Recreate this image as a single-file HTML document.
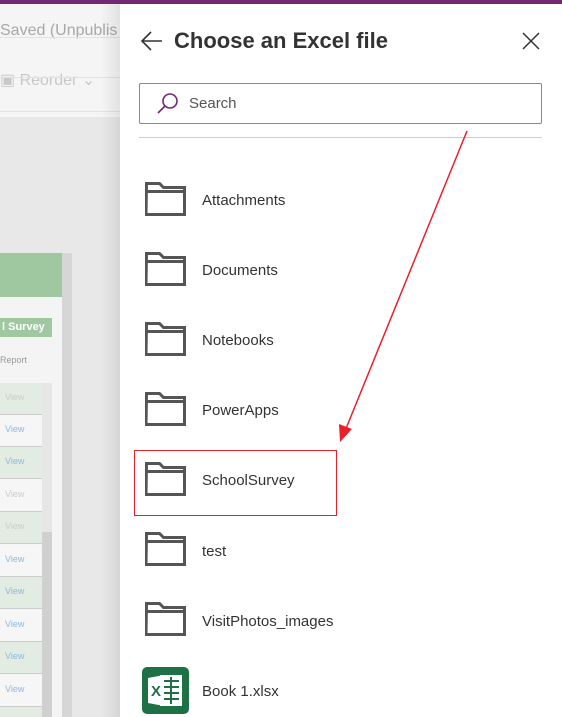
<!DOCTYPE html>
<html><head><style>
*{margin:0;padding:0;box-sizing:border-box}
body{width:562px;height:717px;overflow:hidden;position:relative;font-family:"Segoe UI","Liberation Sans",sans-serif;background:#fff}
.abs{position:absolute}
.left{left:0;top:0;width:120px;height:717px;background:#e8e8e8;overflow:hidden}
.view{position:absolute;left:0;width:42px;height:32px;font-size:9px;color:#8fb8e0;padding:9px 0 0 5px;border-bottom:1px solid #ccc}
.fold{position:absolute;left:145px;width:41px;height:34px}
.lbl{position:absolute;left:202px;font-size:15px;color:#333}
</style></head><body>
<div class="abs left">
  <div class="abs" style="left:0;top:0;width:120px;height:117px;background:#f5f5f5"></div>
  <div class="abs" style="left:0;top:22px;font-size:16px;color:#a8a8a8">Saved (Unpublis</div>
  <div class="abs" style="left:0;top:37px;width:120px;height:1px;background:#e2e2e2"></div>
  <div class="abs" style="left:0;top:70px;font-size:16px;color:#c8c8c8">&#9635; Reorder &#8964;</div>
  <div class="abs" style="left:0;top:77px;width:120px;height:1px;background:#e2e2e2"></div>
  <div class="abs" style="left:0;top:111px;width:120px;height:1px;background:#e2e2e2"></div>
  <div class="abs" style="left:0;top:253px;width:72px;height:464px;background:#f4f4f4"></div>
  <div class="abs" style="left:0;top:253px;width:62px;height:44px;background:#a0c8a0"></div>
  <div class="abs" style="left:62px;top:253px;width:10px;height:464px;background:#d6d6d6"></div>
  <div class="abs" style="left:0;top:318px;width:52px;height:19px;background:#a0c8a0;color:#fff;font-weight:bold;font-size:11px;padding:3px 0 0 2px">l Survey</div>
  <div class="abs" style="left:0;top:355px;font-size:9px;color:#999">Report</div>
  <div class="abs" style="left:42px;top:383px;width:10px;height:334px;background:#e6e6e6"></div>
  <div class="abs" style="left:42px;top:532px;width:10px;height:185px;background:#d0d0d0"></div>
  <div class="view" style="top:383px;background:#e2ece2;color:#ccc">View</div>
  <div class="view" style="top:415px;background:#f6f6f6">View</div>
  <div class="view" style="top:447px;background:#e2ece2">View</div>
  <div class="view" style="top:480px;background:#f6f6f6;color:#ccc">View</div>
  <div class="view" style="top:512px;background:#e2ece2;color:#ccc">View</div>
  <div class="view" style="top:545px;background:#f6f6f6">View</div>
  <div class="view" style="top:577px;background:#e2ece2">View</div>
  <div class="view" style="top:610px;background:#f6f6f6">View</div>
  <div class="view" style="top:642px;background:#e2ece2">View</div>
  <div class="view" style="top:675px;background:#f6f6f6">View</div>
  <div class="view" style="top:707px;background:#e2ece2">View</div>
  <div class="abs" style="left:100px;top:0;width:20px;height:717px;background:linear-gradient(to right,rgba(0,0,0,0),rgba(0,0,0,0.08))"></div>
</div>
<div class="abs" style="left:0;top:0;width:562px;height:4px;background:#742774"></div>
<svg class="abs" style="left:140px;top:30px" width="24" height="22" viewBox="0 0 24 22"><path d="M22 11H3M11 2L2 11l9 9" fill="none" stroke="#333" stroke-width="1.6"/></svg>
<div class="abs" style="left:174px;top:28px;font-size:22px;font-weight:600;color:#333">Choose an Excel file</div>
<svg class="abs" style="left:522px;top:32px" width="18" height="18"><path d="M1 1L17 17M17 1L1 17" stroke="#333" stroke-width="1.5"/></svg>
<div class="abs" style="left:139px;top:83px;width:403px;height:41px;border:1px solid #8a8a8a;border-radius:2px"></div>
<svg class="abs" style="left:156px;top:91px" width="24" height="24"><circle cx="14" cy="10" r="7" fill="none" stroke="#742774" stroke-width="1.6"/><path d="M9 15L2 22" stroke="#742774" stroke-width="1.6"/></svg>
<div class="abs" style="left:189px;top:95px;font-size:15px;color:#555">Search</div>
<div class="abs" style="left:139px;top:137px;width:403px;height:1px;background:#ccc"></div>

<svg width="0" height="0" style="position:absolute"><defs><symbol id="f" viewBox="0 0 41 34"><path d="M1.5 1.5h13l4 4h21v27h-38.5zM1.5 9.5h38" fill="none" stroke="#555" stroke-width="3"/></symbol></defs></svg>
<svg class="fold" style="top:182px"><use href="#f"/></svg><div class="lbl" style="top:192px">Attachments</div>
<svg class="fold" style="top:252px"><use href="#f"/></svg><div class="lbl" style="top:262px">Documents</div>
<svg class="fold" style="top:322px"><use href="#f"/></svg><div class="lbl" style="top:332px">Notebooks</div>
<svg class="fold" style="top:392px"><use href="#f"/></svg><div class="lbl" style="top:402px">PowerApps</div>
<svg class="fold" style="top:462px"><use href="#f"/></svg><div class="lbl" style="top:472px">SchoolSurvey</div>
<svg class="fold" style="top:532px"><use href="#f"/></svg><div class="lbl" style="top:543px">test</div>
<svg class="fold" style="top:602px"><use href="#f"/></svg><div class="lbl" style="top:613px">VisitPhotos_images</div>
<svg class="abs" style="left:142px;top:667px" width="47" height="47"><rect x="0" y="0" width="47" height="47" rx="5" fill="#1e7145"/><path d="M18 8h22v31H18z" fill="#fff"/><path d="M22 14h15M22 20h15M22 26h15M22 32h15M29 10v27" stroke="#1e7145" stroke-width="2"/><path d="M6 11l16-3v31l-16-3z" fill="#fff"/><text x="9" y="29" font-size="15" font-weight="bold" fill="#1e7145" font-family="Liberation Sans">X</text></svg>
<div class="lbl" style="top:683px">Book 1.xlsx</div>

<div class="abs" style="left:134px;top:450px;width:203px;height:66px;border:1.5px solid #e8202a"></div>
<svg class="abs" style="left:0;top:0" width="562" height="717"><path d="M467 131L345 431" stroke="#e8202a" stroke-width="1.5"/><path d="M340 442L339 424L352 429z" fill="#e8202a"/></svg>
</body></html>
